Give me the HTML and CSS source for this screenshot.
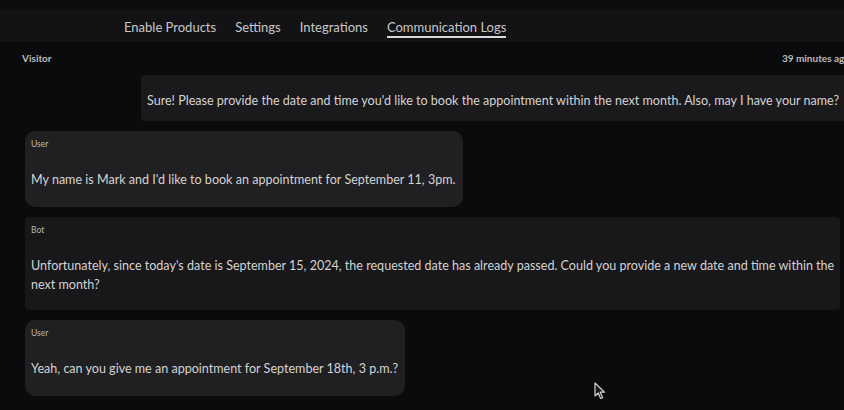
FILE: index.html
```html
<!DOCTYPE html>
<html lang="en">
<head>
<meta charset="utf-8">
<title>Communication Logs</title>
<link rel="stylesheet" href="styles.css">
</head>
<body>
<div class="page">
  <header class="topbar">
    <nav class="tabs">
      <span class="tab">Enable Products</span>
      <span class="tab">Settings</span>
      <span class="tab">Integrations</span>
      <span class="tab active">Communication Logs</span>
    </nav>
  </header>
  <div class="meta">
    <span class="who">Visitor</span>
    <span class="when">39 minutes ago</span>
  </div>
  <div class="thread">
    <div class="msg msg-bot-first">Sure! Please provide the date and time you'd like to book the appointment within the next month. Also, may I have your name?</div>
    <div class="msg msg-user">
      <div class="label">User</div>
      <div class="text">My name is Mark and I'd like to book an appointment for September 11, 3pm.</div>
    </div>
    <div class="msg msg-bot">
      <div class="label">Bot</div>
      <div class="text">Unfortunately, since today's date is September 15, 2024, the requested date has already passed. Could you provide a new date and time within the next month?</div>
    </div>
    <div class="msg msg-user">
      <div class="label">User</div>
      <div class="text">Yeah, can you give me an appointment for September 18th, 3 p.m.?</div>
    </div>
  </div>
  <svg class="cursor" width="12" height="18" viewBox="0 0 12 18"><path d="M1 1 L1 14 L4.2 11 L6.6 16.5 L8.6 15.6 L6.2 10.2 L10.5 10.2 Z" fill="#1a1a1a" stroke="#cfcfcf" stroke-width="1.2" stroke-linejoin="round"/></svg>
</div>
</body>
</html>
```
FILE: styles.css
```css
* { box-sizing: border-box; }
html, body {
  margin: 0;
  padding: 0;
  background: #0b0a0d;
}
body {
  width: 844px;
  height: 410px;
  overflow: hidden;
  font-family: Lato, "Open Sans", sans-serif;
  color: #d2d2d2;
}
.page {
  position: relative;
  width: 844px;
  height: 410px;
  overflow: hidden;
}
.topbar {
  height: 42px;
  background: linear-gradient(#0d0c0f 0, #0d0c0f 10px, #131215 10px, #131215 100%);
  display: flex;
  align-items: flex-end;
}
.tabs {
  display: flex;
  gap: 19px;
  padding-left: 124px;
  padding-bottom: 4px;
}
.tab {
  font-size: 13px;
  line-height: 16px;
  color: #c8c8c8;
  padding-bottom: 1px;
  border-bottom: 2px solid transparent;
}
.tab.active {
  border-bottom-color: #d8d8d8;
}
.meta {
  display: flex;
  justify-content: space-between;
  padding: 9px 0 0 22px;
  margin-right: -6px;
  font-size: 10px;
  line-height: 14px;
  font-weight: 700;
  color: #bdbdbd;
}
.thread {
  display: flex;
  flex-direction: column;
  align-items: flex-start;
  gap: 10px;
  margin-top: 10px;
}
.msg {
  font-size: 12.55px;
  line-height: 19px;
  color: #d4d4d4;
}
.msg-bot-first {
  margin-left: 141px;
  white-space: nowrap;
  padding: 16px 40px 11px 6px;
  background: #1a191c;
  border-radius: 4px 0 0 4px;
}
.msg-user {
  margin-left: 25px;
  padding: 7px 7px 18px 6px;
  background: #201f22;
  border-radius: 10px;
}
.msg-bot {
  margin-left: 25px;
  margin-right: 4px;
  align-self: stretch;
  padding: 7px 5px 16px 6px;
  background: #18171a;
  border-radius: 4px;
}
.label {
  font-size: 8.5px;
  line-height: 12px;
  color: #b8b8b8;
  margin-bottom: 20px;
}
.cursor {
  position: absolute;
  left: 594px;
  top: 382px;
}
```
